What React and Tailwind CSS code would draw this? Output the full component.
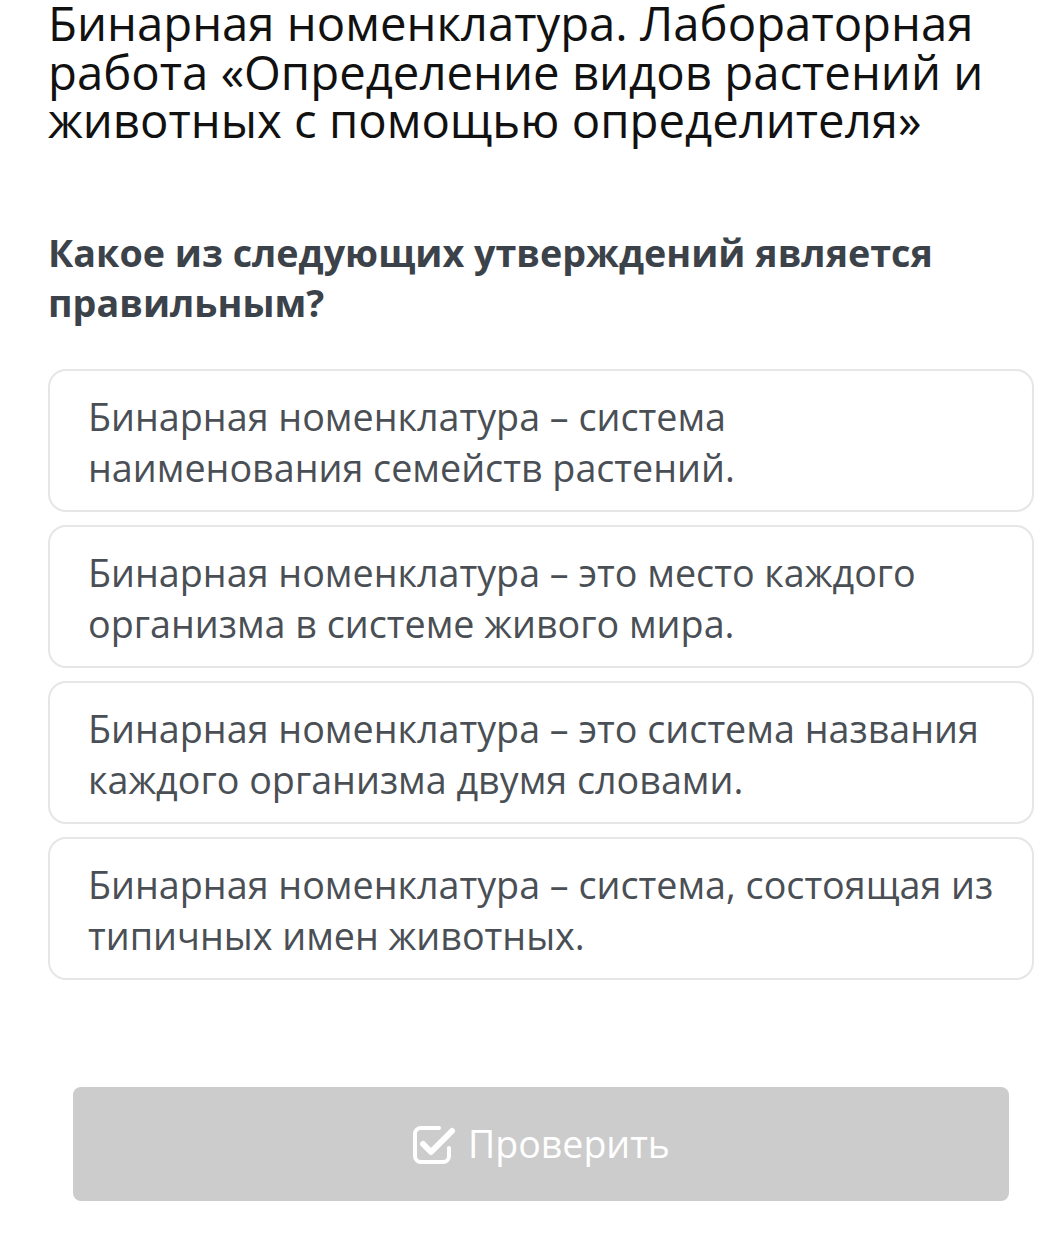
const answers = [
  "Бинарная номенклатура – система наименования семейств растений.",
  "Бинарная номенклатура – это место каждого организма в системе живого мира.",
  "Бинарная номенклатура – это система названия каждого организма двумя словами.",
  "Бинарная номенклатура – система, состоящая из типичных имен животных.",
];

// outlined box with a bold tick breaking out of its top-right corner
function CheckIcon() {
  return (
    <svg width="44" height="40" viewBox="0 0 44 40" fill="none" stroke="currentColor" strokeLinecap="round" strokeLinejoin="round">
      <path d="M27 4H9a6 6 0 0 0-6 6v22a6 6 0 0 0 6 6h22a6 6 0 0 0 6-6v-8" strokeWidth="4" />
      <path d="M11 20l8 8L40 7" strokeWidth="6" />
    </svg>
  );
}

export default function App() {
  return (
    <div className="min-h-[1259px] w-[1040px] bg-white font-['Open_Sans',sans-serif]">
      <div className="pl-[48px] pr-[6px]">
        <h1 className="-mt-[1px] text-[47.3px] leading-[48.5px] text-[#111]">
          Бинарная номенклатура. Лабораторная работа «Определение видов растений и животных с помощью определителя»
        </h1>

        <h2 className="mt-[83px] text-[37.7px] leading-[50px] font-bold text-[#3c4249]">
          Какое из следующих утверждений является правильным?
        </h2>

        <div className="mt-[41px] flex flex-col gap-[13.3px]">
          {answers.map((a) => (
            <div
              key={a}
              className="h-[143px] rounded-[18px] border-2 border-[#e4e6e7] pl-[38px] pr-[26px] pt-[20px] text-[37.7px] leading-[51px] text-[#4a4f55]"
            >
              {a}
            </div>
          ))}
        </div>

        <div className="mt-[107px] pl-[25px] pr-[25px]">
          <button className="flex h-[114px] w-full items-center justify-center gap-[12px] rounded-[8px] bg-[#cccccc] text-[37.5px] text-white">
            <CheckIcon />
            Проверить
          </button>
        </div>
      </div>
    </div>
  );
}
